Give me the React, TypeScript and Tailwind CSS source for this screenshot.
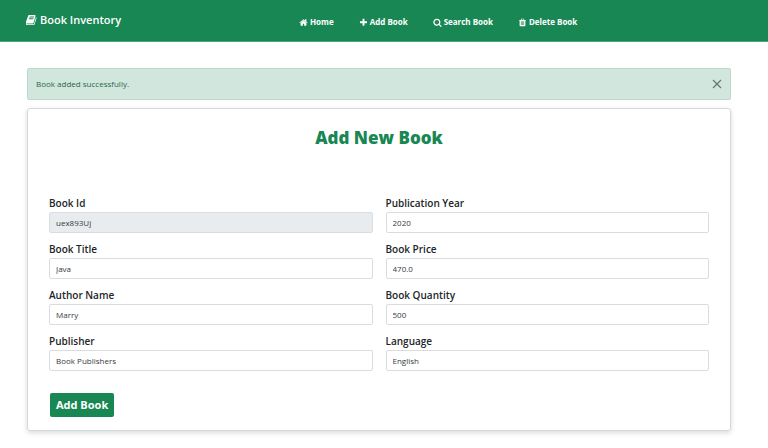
import { useState } from 'react';

const ICONS = {
  book: 'M1639 478q40 57 18 129l-275 906q-19 64-76.5 107.5t-122.5 43.5h-923q-77 0-148.5-53.5t-99.5-131.5q-24-67-2-127 0-4 3-27t4-37q1-8-3-21.5t-3-19.5q2-11 8-21t16.5-23.5 16.5-23.5q23-38 45-91.5t30-91.5q3-10 .5-30t-.5-28q3-11 17-28t17-23q21-36 42-92t25-90q1-9-2.5-32t.5-28q4-13 22-30.5t22-22.5q19-26 42.5-84.5t27.5-96.5q1-8-3-25.5t-2-26.5q2-8 9-18t18-23 17-21q8-12 16.5-30.5t15-35 16-36 19.5-32 26.5-23.5 36-11.5 47.5 5.5l-1 3q38-9 51-9h761q74 0 114 56t18 130l-274 906q-36 119-71.5 153.5t-128.5 34.5h-869q-27 0-38 15-11 16-1 43 24 70 144 70h923q29 0 56-15.5t35-41.5l300-987q7-22 5-57 38 15 59 43zm-1064 2q-4 13 2 22.5t20 9.5h608q13 0 25.5-9.5t16.5-22.5l21-64q4-13-2-22.5t-20-9.5h-608q-13 0-25.5 9.5t-16.5 22.5zm-83 256q-4 13 2 22.5t20 9.5h608q13 0 25.5-9.5t16.5-22.5l21-64q4-13-2-22.5t-20-9.5h-608q-13 0-25.5 9.5t-16.5 22.5z',
  home: 'M1472 992v480q0 26-19 45t-45 19h-384v-384h-256v384h-384q-26 0-45-19t-19-45v-480q0-1 .5-3t.5-3l575-474 575 474q1 2 1 6zm223-69l-62 74q-8 9-21 11h-3q-13 0-21-7l-692-577-692 577q-12 8-24 7-13-2-21-11l-62-74q-8-10-7-23.5t11-21.5l719-599q32-26 76-26t76 26l244 204v-195q0-14 9-23t23-9h192q14 0 23 9t9 23v408l219 182q10 8 11 21.5t-7 23.5z',
  plus: 'M1600 736v192q0 40-28 68t-68 28h-416v416q0 40-28 68t-68 28h-192q-40 0-68-28t-28-68v-416h-416q-40 0-68-28t-28-68v-192q0-40 28-68t68-28h416v-416q0-40 28-68t68-28h192q40 0 68 28t28 68v416h416q40 0 68 28t28 68z',
  search: 'M1216 832q0-185-131.5-316.5t-316.5-131.5-316.5 131.5-131.5 316.5 131.5 316.5 316.5 131.5 316.5-131.5 131.5-316.5zm512 832q0 52-38 90t-90 38q-54 0-90-38l-343-342q-179 124-399 124-143 0-273.5-55.5t-225-150-150-225-55.5-273.5 55.5-273.5 150-225 225-150 273.5-55.5 273.5 55.5 225 150 150 225 55.5 273.5q0 220-124 399l343 343q37 37 37 90z',
  trash: 'M704 1376v-704q0-14-9-23t-23-9h-64q-14 0-23 9t-9 23v704q0 14 9 23t23 9h64q14 0 23-9t9-23zm256 0v-704q0-14-9-23t-23-9h-64q-14 0-23 9t-9 23v704q0 14 9 23t23 9h64q14 0 23-9t9-23zm256 0v-704q0-14-9-23t-23-9h-64q-14 0-23 9t-9 23v704q0 14 9 23t23 9h64q14 0 23-9t9-23zm-544-992h448l-48-117q-7-9-17-11h-317q-10 2-17 11zm928 32v64q0 14-9 23t-23 9h-96v948q0 83-47 143.5t-113 60.5h-832q-66 0-113-58.5t-47-141.5v-952h-96q-14 0-23-9t-9-23v-64q0-14 9-23t23-9h309l70-167q15-37 54-63t79-26h320q40 0 79 26t54 63l70 167h309q14 0 23 9t9 23z',
};

const Icon = ({ name, className }: { name: keyof typeof ICONS; className: string }) => (
  <svg viewBox="64 0 1664 1792" fill="currentColor" className={className} aria-hidden="true">
    <path d={ICONS[name]} />
  </svg>
);

const LINKS: { label: string; icon: keyof typeof ICONS; href: string }[] = [
  { label: 'Home', icon: 'home', href: '#home' },
  { label: 'Add Book', icon: 'plus', href: '#add' },
  { label: 'Search Book', icon: 'search', href: '#search' },
  { label: 'Delete Book', icon: 'trash', href: '#delete' },
];

const FIELDS = [
  { id: 'bookId', label: 'Book Id', value: 'uex893Uj', readOnly: true },
  { id: 'year', label: 'Publication Year', value: '2020' },
  { id: 'title', label: 'Book Title', value: 'Java' },
  { id: 'price', label: 'Book Price', value: '470.0' },
  { id: 'author', label: 'Author Name', value: 'Marry' },
  { id: 'quantity', label: 'Book Quantity', value: '500' },
  { id: 'publisher', label: 'Publisher', value: 'Book Publishers' },
  { id: 'language', label: 'Language', value: 'English' },
];

export default function App() {
  const [showAlert, setShowAlert] = useState(true);

  return (
    <div className="min-h-screen bg-white font-['Open_Sans','Noto_Sans',sans-serif] text-[#212529]">
      {/* Navbar */}
      <header className="grid grid-cols-[273px_1fr] items-center border-b border-[#4da57b] bg-[#198754] pt-3 pb-[9px] pl-[26px] text-white">
        <a href="#home" className="flex items-center gap-[3px] pb-1 text-[11px] leading-4 font-semibold">
          <Icon name="book" className="h-3 w-[11px]" />
          Book Inventory
        </a>
        <nav className="flex gap-[25px]">
          {LINKS.map((link) => (
            <a key={link.label} href={link.href} className="flex items-center gap-[2px] text-[8px] leading-5 font-bold whitespace-nowrap">
              <Icon name={link.icon} className="h-[9px] w-[9px]" />
              {link.label}
            </a>
          ))}
        </nav>
      </header>

      <main className="pt-[26px] pr-[37px] pb-4 pl-[27px]">
        {showAlert && (
          <div role="alert" className="mb-2 flex items-center justify-between rounded-[2px] border border-[#badbcc] bg-[#d1e7dd] px-2 py-[7px] text-[8px] leading-4 text-[#2c6549]">
            <span>Book added successfully.</span>
            <button type="button" aria-label="Close" onClick={() => setShowAlert(false)} className="cursor-pointer">
              <svg viewBox="0 0 10 10" className="size-[10px] text-[#68756f]" fill="none" stroke="currentColor" strokeWidth="1.2">
                <path d="M1 1l8 8M9 1l-8 8" />
              </svg>
            </button>
          </div>
        )}

        {/* Book form */}
        <form className="rounded-[3px] border border-[#d3d8dd] px-[21px] pt-[17px] pb-[13px] shadow-[0_2px_5px_rgba(0,0,0,0.15)]" onSubmit={(e) => e.preventDefault()}>
          <h1 className="mb-[46px] text-center text-[17px] leading-6 font-extrabold text-[#198754]">Add New Book</h1>
          <div className="grid grid-cols-2 gap-x-[13px] gap-y-[9px]">
            {FIELDS.map((field) => (
              <div key={field.id} className="flex flex-col gap-[2px]">
                <label htmlFor={field.id} className="text-[10px] leading-[14px] font-semibold">
                  {field.label}
                </label>
                <input
                  id={field.id}
                  type="text"
                  defaultValue={field.value}
                  readOnly={field.readOnly}
                  className={`h-[21px] w-full rounded-[2px] border border-[#d9dde2] px-[6px] pb-px text-[8px] text-[#343a40] ${field.readOnly ? 'bg-[#e9ecef]' : 'bg-white'}`}
                />
              </div>
            ))}
          </div>
          <button type="submit" className="mt-[22px] ml-px h-6 cursor-pointer rounded-[2px] bg-[#198754] px-[6px] text-[11px] font-bold text-white">
            Add Book
          </button>
        </form>
      </main>
    </div>
  );
}
